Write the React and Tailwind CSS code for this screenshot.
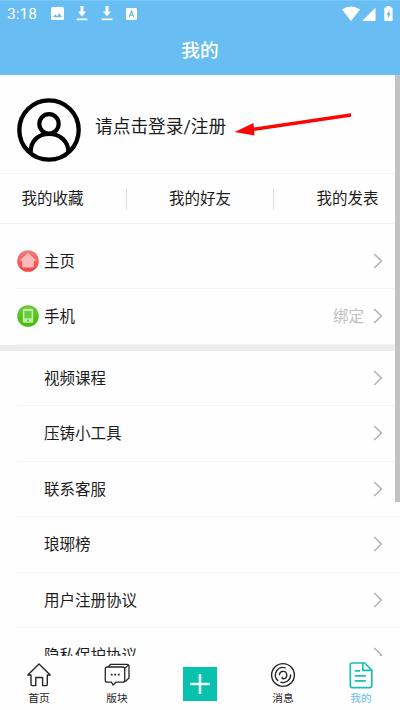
import React from 'react';

const accountRows = [
  { label: '主页', icon: 'home' },
  { label: '手机', icon: 'phone', note: '绑定' }
];

const menuRows = ['视频课程', '压铸小工具', '联系客服', '琅琊榜', '用户注册协议', '隐私保护协议'];

const ImageIcon = () => (
  <svg className="w-[13px] h-[13px]" viewBox="0 0 13 13">
    <rect width="13" height="13" rx="1.5" fill="#fff" />
    <path d="M2 10.3 4.3 7.3 6 9.2 8.3 6.3 11.2 10.3Z" fill="#68bdf2" />
  </svg>
);

const DownloadIcon = () => (
  <svg className="w-3 h-[15px]" viewBox="0 0 12 15">
    <path d="M4.5 0H7.5V5.5H10L6 10.5 2 5.5H4.5Z" fill="#fff" />
    <path d="M.6 12.5H11.4V14.2H.6Z" fill="#fff" />
  </svg>
);

const KeyboardIcon = () => (
  <svg className="w-[11px] h-3" viewBox="0 0 11 12">
    <rect width="11" height="12" rx="1" fill="#fff" />
    <path d="M3.2 9 5.5 3 7.8 9M4 7.2H7" fill="none" stroke="#68aee0" strokeWidth="1.1" />
  </svg>
);

const SignalIcons = () => (
  <svg className="w-[52px] h-4" viewBox="0 0 52 16">
    <path d="M0 3.5Q9-2.5 18 3.5L9 15Z" fill="#fff" />
    <path d="M33.5 1.5V15H20.3Z" fill="#fff" />
    <path d="M44.5 0H48.5V1.5H49.8Q50.6 1.5 50.6 2.4V14.2Q50.6 15 49.8 15H43Q42.3 15 42.3 14.2V2.4Q42.3 1.5 43 1.5H44.5Z" fill="#fff" />
    <path d="M47.3 4 44.4 9H46.1V12.5L48.8 7.6H47.3Z" fill="#68bdf2" />
  </svg>
);

const Avatar = () => (
  <svg className="w-16 h-16" viewBox="0 0 64 64" fill="none" stroke="#000">
    <circle cx="32" cy="32" r="29.7" strokeWidth="4.3" />
    <circle cx="32" cy="25.8" r="9.7" strokeWidth="4.2" />
    <path d="M13.7 54C13.7 43 21 36 32 36S51.3 43 51.3 54" strokeWidth="4.2" />
  </svg>
);

const HomeBadge = () => (
  <svg className="w-[22px] h-[22px]" viewBox="0 0 22 22">
    <defs>
      <linearGradient id="homeFill" x1="0" y1="0" x2="0" y2="1">
        <stop offset="0" stopColor="#ef7f7f" />
        <stop offset="1" stopColor="#fc4242" />
      </linearGradient>
    </defs>
    <circle cx="11" cy="11" r="10.8" fill="url(#homeFill)" />
    <path d="M11 3.5 18.5 10.3H16.3V17H5.7V10.3H3.5Z" fill="#fdb9b9" stroke="#ffd6d6" strokeWidth=".7" strokeLinejoin="round" />
  </svg>
);

const PhoneBadge = () => (
  <svg className="w-[22px] h-[22px]" viewBox="0 0 22 22">
    <defs>
      <linearGradient id="phoneFill" x1="0" y1="0" x2="0" y2="1">
        <stop offset="0" stopColor="#6dcb3b" />
        <stop offset="1" stopColor="#43b90b" />
      </linearGradient>
    </defs>
    <circle cx="11" cy="11" r="10.8" fill="url(#phoneFill)" />
    <rect x="5.8" y="3.8" width="10.4" height="14" rx="1.6" fill="#c2efa6" />
    <rect x="7.4" y="6" width="7.2" height="7.3" rx=".5" fill="#6ccc3e" />
    <circle cx="11" cy="15.6" r="1" fill="#55bd25" />
  </svg>
);

const Chevron = () => (
  <svg className="w-[10px] h-4" viewBox="0 0 10 16" fill="none" stroke="#b4b4b4" strokeWidth="1.6">
    <path d="M1.2 1 8.4 8 1.2 15" />
  </svg>
);

const HouseTab = () => (
  <svg className="w-[26px] h-[26px]" viewBox="0 0 26 26" fill="none" stroke="#262626" strokeWidth="1.4" strokeLinejoin="round" strokeLinecap="round">
    <path d="M1.8 13 13 2 24.2 13H21.3V22.6Q21.3 23.6 20.3 23.6H16.6V15.5H9.8V23.6H6Q5 23.6 5 22.6V13Z" />
  </svg>
);

const BoardTab = () => (
  <svg className="w-[26px] h-[26px]" viewBox="0 0 26 26" fill="none" stroke="#262626" strokeWidth="1.3" strokeLinejoin="round">
    <path d="M3.2 5H18.8Q20.7 5 20.7 6.9V18.3Q20.7 20.2 18.8 20.2H12L9 23 7.5 20.2H3.2Q1.3 20.2 1.3 18.3V6.9Q1.3 5 3.2 5Z" />
    <path d="M4.4 4.7 6.6 2.3H23Q25 2.3 25 4.3V16L21 19.7M21 6.2 24.4 2.9" />
    <path d="M6.8 12.7H8.6M10.3 12.7H12.1M13.8 12.7H15.6" strokeWidth="1.8" />
  </svg>
);

const MessageTab = () => (
  <svg className="w-[26px] h-[26px]" viewBox="0 0 26 26" fill="none" stroke="#262626" strokeWidth="1.4" strokeLinecap="round">
    <circle cx="13" cy="13" r="11.4" />
    <path d="M15.2 5.8A7.6 7.6 0 0 0 7.7 18.5M20.6 13A7.6 7.6 0 0 1 11 20.3" />
    <path d="M9.4 12.6A3.7 3.7 0 1 1 13.4 16.8M13 16.7Q11.8 16.4 12.2 15.2" />
  </svg>
);

const MineTab = () => (
  <svg className="w-[26px] h-[28px]" viewBox="0 0 26 28" fill="none" stroke="#18c2ae" strokeWidth="1.7" strokeLinejoin="round" strokeLinecap="round">
    <path d="M4.3 2H16.7L23.8 9.3V24.5Q23.8 26.6 21.7 26.6H4.3Q2.3 26.6 2.3 24.5V4Q2.3 2 4.3 2Z" />
    <path d="M14.8 2.2V9.4H23.5" />
    <path d="M7.4 9.8H11.7M7.4 14.8H17.3M7.4 19.8H17.3" />
  </svg>
);

const Row = ({ label, note, icon }) => (
  <div className="ml-[17px] h-[55.5px] shrink-0 border-b border-[#f4f4f4] flex items-center pr-[17px]">
    <div className="w-[27px] shrink-0">
      {icon === 'home' && <HomeBadge />}
      {icon === 'phone' && <PhoneBadge />}
    </div>
    <span className="flex-1 pt-[2px] text-[15.5px] leading-5 text-[#1c1c1c]">{label}</span>
    {note && <span className="mr-[9px] pt-[2px] text-[15.5px] leading-5 text-[#c0c0c0]">{note}</span>}
    <Chevron />
  </div>
);

const Tab = ({ label, active, children }) => (
  <div className="w-[78px] flex flex-col items-center pt-[5px]">
    <div className="h-[28px] flex items-center">{children}</div>
    <span className={`mt-[3px] text-[10.7px] leading-[14px] ${active ? 'text-[#68bdf2]' : 'text-[#222]'}`}>{label}</span>
  </div>
);

const App = () => {
  return (
    <div className="relative w-[400px] h-[710px] overflow-hidden bg-[#fefefe] flex flex-col font-['Roboto','Noto_Sans_CJK_SC',sans-serif]">
      <header className="h-[75px] shrink-0 bg-[#68bdf2] border-t border-[#78c7f6] text-white">
        <div className="h-[25px] pl-[7px] pr-[6px] flex items-center justify-between">
          <div className="flex items-center">
            <span className="w-[44px] text-[15.5px] leading-5">3:18</span>
            <ImageIcon />
            <div className="ml-3 mr-[13px] flex gap-[13px]">
              <DownloadIcon />
              <DownloadIcon />
            </div>
            <KeyboardIcon />
          </div>
          <SignalIcons />
        </div>
        <h1 className="mt-[11px] text-center text-[18.7px] leading-7 font-medium">我的</h1>
      </header>

      <main className="h-[580.5px] shrink-0 overflow-hidden flex flex-col">
        <section className="h-[99px] shrink-0 border-b border-[#f3f3f3] pl-[17px] pt-[23px] flex items-start">
          <Avatar />
          <span className="ml-[14px] mt-[17px] text-[17.7px] leading-6 text-[#1c1c1c]">请点击登录/注册</span>
        </section>

        <section className="h-[50px] shrink-0 border-b border-[#f3f3f3] pl-[21.5px] pr-[21.5px] pt-px flex items-center justify-between text-[15.5px] text-[#1c1c1c]">
          <span className="pt-px">我的收藏</span>
          <span className="w-[1.5px] h-[21px] bg-[#dedede]" />
          <span className="pt-px">我的好友</span>
          <span className="w-[1.5px] h-[21px] bg-[#dedede]" />
          <span className="pt-px">我的发表</span>
        </section>

        <section className="mt-[9.5px] shrink-0 border-b-[6px] border-[#ececec]">
          {accountRows.map((row) => (
            <Row key={row.label} {...row} />
          ))}
        </section>

        <section className="shrink-0">
          {menuRows.map((label) => (
            <Row key={label} label={label} />
          ))}
        </section>
      </main>

      <nav className="flex-1 bg-[#fefefe] flex justify-center">
        <Tab label="首页"><HouseTab /></Tab>
        <Tab label="版块"><BoardTab /></Tab>
        <div className="w-[88px] flex justify-center pt-[11px]">
          <svg className="w-[34px] h-[34px]" viewBox="0 0 34 34">
            <rect width="34" height="34" fill="#08c2ad" />
            <path d="M17 7V27M7 17H27" stroke="#e9fffb" strokeWidth="2.6" />
          </svg>
        </div>
        <Tab label="消息"><MessageTab /></Tab>
        <Tab label="我的" active><MineTab /></Tab>
      </nav>

      {/* scroll thumb */}
      <div className="absolute right-0 top-[75px] w-[5px] h-[427px] bg-[#c3c3c3]" />

      {/* arrow pointing to the login text */}
      <svg className="absolute left-[230px] top-[108px] w-[125px] h-[32px]" viewBox="0 0 125 32">
        <path d="M22 21.5 121 7" stroke="#fb0505" strokeWidth="3.6" />
        <path d="M4.5 24 23.5 15 24.5 27.5Z" fill="#fb0505" />
      </svg>
    </div>
  );
};

export default App;
